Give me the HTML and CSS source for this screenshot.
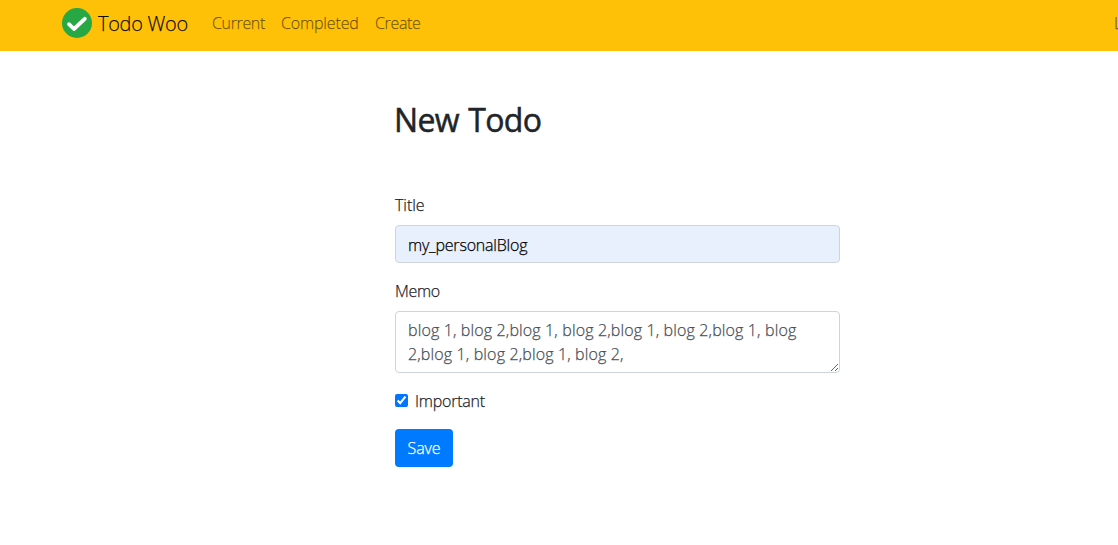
FILE: index.html
```html
<!DOCTYPE html>
<html lang="en">
<head>
<meta charset="utf-8">
<title>Todo Woo</title>
<link rel="stylesheet" href="styles.css">
</head>
<body>
<nav class="navbar">
  <a class="brand"><svg class="logo" viewBox="0 0 30 30"><circle cx="15" cy="15" r="15" fill="#28a745"/><path d="M7 16.2l4.9 4.8L22.8 10.8" fill="none" stroke="#fff" stroke-width="3.8" stroke-linecap="round" stroke-linejoin="round"/></svg><span class="brand-text">Todo Woo</span></a>
  <div class="links"><a class="link current">Current</a><a class="link completed">Completed</a><a class="link create">Create</a></div>
  <a class="link logout">Logout</a>
</nav>
<main class="content">
  <h2 class="heading">New Todo</h2>
  <form class="form">
    <label class="label" for="title">Title</label>
    <input class="control title" id="title" value="my_personalBlog">
    <label class="label memo-label" for="memo">Memo</label>
    <textarea class="control memo" id="memo" spellcheck="false">blog 1, blog 2,blog 1, blog 2,blog 1, blog 2,blog 1, blog 
2,blog 1, blog 2,blog 1, blog 2,</textarea>
    <label class="check"><input type="checkbox" class="box" checked><span>Important</span></label>
    <button class="save" type="button">Save</button>
  </form>
</main>
</body>
</html>
```
FILE: styles.css
```css
* { box-sizing: border-box; }
body { margin: 0; overflow: hidden; background: #fff; color: #212529; font: 300 16px/24px "Open Sans", "Noto Sans", sans-serif; -webkit-text-stroke: .25px; }
.navbar { height: 51px; background: #ffc107; display: flex; align-items: center; padding: 0 0 5px 62px; white-space: nowrap; }
.brand { display: flex; align-items: center; gap: 6px; width: 150px; flex: none; font-size: 20px; color: rgba(0,0,0,.9); }
.brand-text { letter-spacing: -.3px; padding-top: 1px; }
.logo { width: 30px; height: 30px; }
.links { display: flex; }
.link { color: rgba(0,0,0,.5); letter-spacing: -.35px; }
.current { width: 69px; }
.completed { width: 94px; letter-spacing: -.15px; }
.logout { margin-left: auto; width: 50px; margin-right: -46px; }
.content { width: 445px; margin-left: 395px; padding-top: 50px; }
.heading { margin: 0 0 0 -1px; height: 92px; font-size: 32px; line-height: 38px; font-weight: 500; letter-spacing: -.7px; word-spacing: 2px; -webkit-text-stroke: .5px #212529; }
.form { display: flex; flex-direction: column; align-items: flex-start; }
.label { height: 24px; margin-bottom: 8px; letter-spacing: -.05px; }
.memo-label { letter-spacing: -.3px; }
.control { width: 445px; border: 1px solid #ced4da; border-radius: 4px; padding: 6px 12px; font: inherit; color: #495057; margin: 0 0 16px; -webkit-text-stroke: .25px; }
.title { height: 38px; padding: 7px 12px 5px; background: #e8f0fe; color: #000; letter-spacing: -.2px; }
.memo { height: 62px; resize: both; overflow: hidden; white-space: pre; letter-spacing: .14px; }
.check { height: 24px; display: flex; align-items: center; gap: 7px; margin-bottom: 16px; letter-spacing: -.22px; }
.box { width: 13px; height: 13px; margin: 0 0 1px; }
.save { height: 38px; width: 58px; background: #007bff; color: #fff; border: 0; border-radius: 4px; padding: 0; font: inherit; letter-spacing: -.1px; -webkit-text-stroke: .25px; }
```
